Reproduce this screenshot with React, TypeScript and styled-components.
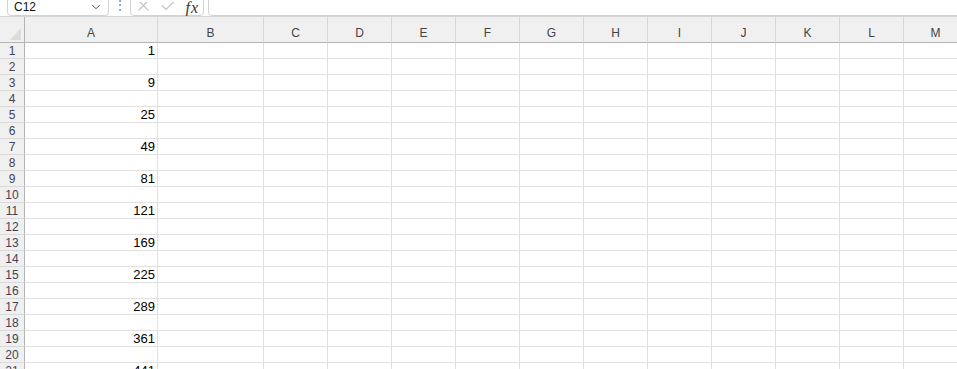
import React from 'react'
import styled, { createGlobalStyle } from 'styled-components'
import { ChevronDown } from 'lucide-react'

const GlobalStyle = createGlobalStyle`
  html, body {
    margin: 0;
    padding: 0;
    background: #ffffff;
    overflow: hidden;
  }
  body {
    font-family: 'Liberation Sans', Arial, sans-serif;
  }
`

const COLUMNS = ['A', 'B', 'C', 'D', 'E', 'F', 'G', 'H', 'I', 'J', 'K', 'L', 'M']
const COL_WIDTHS = [133, 106, 64, 64, 64, 64, 64, 64, 64, 64, 64, 64, 64]
const ROW_COUNT = 22

const Page = styled.div`
  width: 957px;
  height: 369px;
  overflow: hidden;
  background: #fff;
`

// # Formula bar
const FormulaBar = styled.div`
  height: 16px;
  display: flex;
  align-items: flex-end;
  padding-left: 7px;
  border-bottom: 1px solid #d6d6d6;
  overflow: hidden;
`

const RoundBox = styled.div`
  height: 22px;
  box-sizing: border-box;
  border: 1px solid #d2d2d2;
  border-radius: 4px;
  display: flex;
  align-items: center;
  flex-shrink: 0;
`

const NameBox = styled(RoundBox)`
  width: 102px;
  padding: 4px 5px 0 6px;
  justify-content: space-between;
  font-size: 12px;
  color: #111;

  svg {
    color: #444;
    margin-top: -1px;
  }
`

const Dots = styled.div`
  width: 21px;
  display: flex;
  justify-content: center;
  align-items: flex-end;
  height: 22px;
  padding-bottom: 5px;
  box-sizing: border-box;
  font-size: 12px;
  color: #777;
  line-height: 1;
`

const ButtonBox = styled(RoundBox)`
  width: 74px;
  padding: 4px 4px 0 6px;
  justify-content: space-between;
`

const Fx = styled.span`
  font-family: 'Liberation Serif', 'Times New Roman', serif;
  font-style: italic;
  font-size: 16px;
  line-height: 1;
  color: #333;
  margin-top: 1px;
  letter-spacing: 1px;
`

const FormulaInput = styled(RoundBox)`
  flex: 1;
  margin-left: 4px;
  margin-right: -12px;
`

// # Grid
const Grid = styled.div`
  display: grid;
  grid-template-columns: 25px ${COL_WIDTHS.map((w) => `${w}px`).join(' ')};
  grid-auto-rows: 16px;
  grid-template-rows: 26px;
`

const Corner = styled.div`
  background: #f0f0f0;
  border-right: 1px solid #b4b4b4;
  border-bottom: 1px solid #b4b4b4;
  display: flex;
  justify-content: flex-end;
  align-items: flex-end;
  padding: 0 3px 2px 0;
  box-sizing: border-box;
`

const ColHeader = styled.div`
  background: #f0f0f0;
  border-right: 1px solid #d8d8d8;
  border-bottom: 1px solid #b4b4b4;
  box-sizing: border-box;
  display: flex;
  justify-content: center;
  align-items: flex-end;
  padding-bottom: 2px;
  font-family: 'Liberation Sans', Arial, sans-serif;
  font-size: 12px;
  color: #444;
`

const RowHeader = styled.div`
  background: #f0f0f0;
  border-right: 1px solid #b4b4b4;
  border-bottom: 1px solid #dadada;
  box-sizing: border-box;
  display: flex;
  justify-content: center;
  align-items: center;
  font-size: 12px;
  color: #445;
  line-height: 1;
`

const Cell = styled.div<{ $numeric?: boolean }>`
  border-right: 1px solid #e0e0e0;
  border-bottom: 1px solid #e0e0e0;
  box-sizing: border-box;
  display: flex;
  align-items: center;
  justify-content: ${(p) => (p.$numeric ? 'flex-end' : 'flex-start')};
  padding: 0 2px;
  font-size: 13px;
  color: #000;
  line-height: 1;
  overflow: hidden;
`

const App: React.FC = () => {
  const rows = Array.from({ length: ROW_COUNT }, (_, i) => i + 1)
  return (
    <Page>
      <GlobalStyle />
      {/* Formula bar */}
      <FormulaBar>
        <NameBox>
          <span>C12</span>
          <ChevronDown size={14} strokeWidth={1.6} />
        </NameBox>
        <Dots>⋮</Dots>
        <ButtonBox>
          <svg width='13' height='10' viewBox='0 0 13 10'>
            <path d='M1.5 -1.5 L11.5 8.5 M11.5 -1.5 L1.5 8.5' stroke='#c4c4c4' strokeWidth='1.2' fill='none' />
          </svg>
          <svg width='14' height='10' viewBox='0 0 14 10'>
            <path d='M1 3.5 L5 7.5 L13 -0.5' stroke='#c4c4c4' strokeWidth='1.2' fill='none' />
          </svg>
          <Fx>fx</Fx>
        </ButtonBox>
        <FormulaInput />
      </FormulaBar>

      {/* Sheet */}
      <Grid>
        <Corner>
          <svg width='11' height='12' viewBox='0 0 11 12'>
            <polygon points='11,0 11,12 0,12' fill='#dcdcdc' />
          </svg>
        </Corner>
        {COLUMNS.map((c) => (
          <ColHeader key={c}>{c}</ColHeader>
        ))}
        {rows.map((r) => (
          <React.Fragment key={r}>
            <RowHeader>{r}</RowHeader>
            {COLUMNS.map((c) => {
              const value = c === 'A' && r % 2 === 1 ? r * r : null
              return (
                <Cell key={c} $numeric={value !== null}>
                  {value}
                </Cell>
              )
            })}
          </React.Fragment>
        ))}
      </Grid>
    </Page>
  )
}

export default App
